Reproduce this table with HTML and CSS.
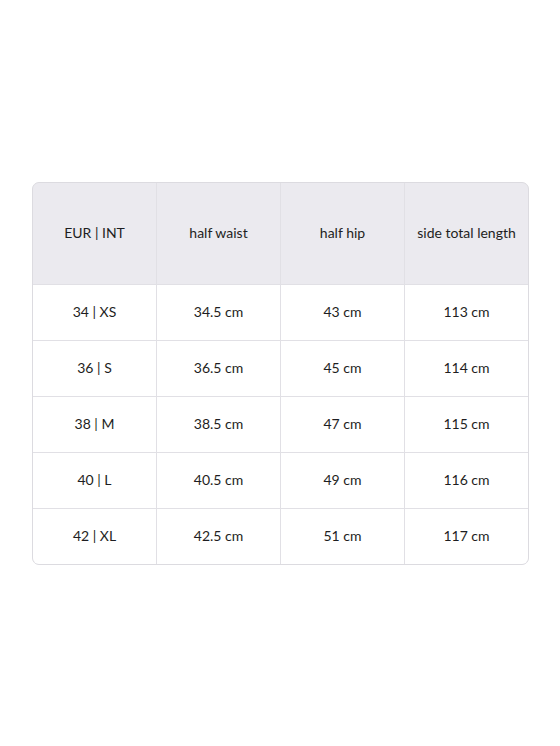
FILE: index.html
```html
<!DOCTYPE html>
<html>
<head>
<meta charset="utf-8">
<link rel="stylesheet" href="styles.css">
</head>
<body>
<div class="page">
  <div class="size-table">
    <div class="cell head">EUR | INT</div>
    <div class="cell head">half waist</div>
    <div class="cell head">half hip</div>
    <div class="cell head">side total length</div>

    <div class="cell">34 | XS</div>
    <div class="cell">34.5 cm</div>
    <div class="cell">43 cm</div>
    <div class="cell">113 cm</div>

    <div class="cell">36 | S</div>
    <div class="cell">36.5 cm</div>
    <div class="cell">45 cm</div>
    <div class="cell">114 cm</div>

    <div class="cell">38 | M</div>
    <div class="cell">38.5 cm</div>
    <div class="cell">47 cm</div>
    <div class="cell">115 cm</div>

    <div class="cell">40 | L</div>
    <div class="cell">40.5 cm</div>
    <div class="cell">49 cm</div>
    <div class="cell">116 cm</div>

    <div class="cell">42 | XL</div>
    <div class="cell">42.5 cm</div>
    <div class="cell">51 cm</div>
    <div class="cell">117 cm</div>
  </div>
</div>
</body>
</html>
```
FILE: styles.css
```css
html, body {
  margin: 0;
  padding: 0;
  background: #ffffff;
}
body {
  font-family: Lato, "Liberation Sans", sans-serif;
  color: #1e1e22;
}
.page {
  padding: 182px 32px 0 32px;
}
.size-table {
  display: grid;
  grid-template-columns: repeat(4, 123px);
  grid-template-rows: 101px repeat(5, 55px);
  gap: 1px;
  width: 495px;
  background: #e1e0e5;
  border: 1px solid #dcdbe0;
  border-radius: 7px;
  overflow: hidden;
}
.cell {
  background: #ffffff;
  display: flex;
  align-items: center;
  justify-content: center;
  padding-bottom: 2px;
  font-size: 14px;
  text-align: center;
}
.head {
  background: #ebeaef;
}
```
